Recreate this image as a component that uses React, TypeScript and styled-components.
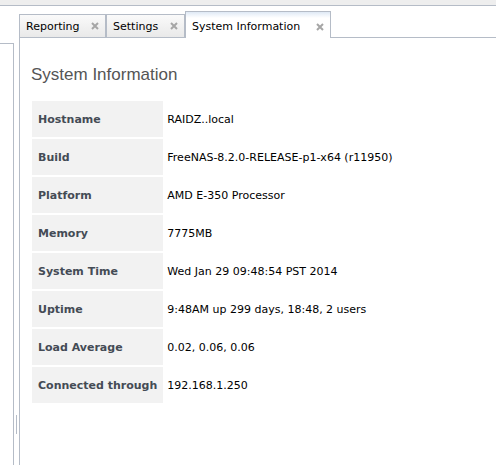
import React from 'react'
import styled, { createGlobalStyle } from 'styled-components'

const GlobalStyle = createGlobalStyle`
  html, body {
    margin: 0;
    padding: 0;
    background: #ffffff;
    overflow: hidden;
  }
`

const TABS = [
  { label: 'Reporting', width: 87, active: false },
  { label: 'Settings', width: 79, active: false },
  { label: 'System Information', width: 146, active: true },
]

const INFO: [string, string][] = [
  ['Hostname', 'RAIDZ..local'],
  ['Build', 'FreeNAS-8.2.0-RELEASE-p1-x64 (r11950)'],
  ['Platform', 'AMD E-350 Processor'],
  ['Memory', '7775MB'],
  ['System Time', 'Wed Jan 29 09:48:54 PST 2014'],
  ['Uptime', '9:48AM up 299 days, 18:48, 2 users'],
  ['Load Average', '0.02, 0.06, 0.06'],
  ['Connected through', '192.168.1.250'],
]

function CloseIcon(): JSX.Element {
  return (
    <CloseSCP width="8" height="8" viewBox="0 0 8 8">
      <path d="M1 1 L7 7 M7 1 L1 7" stroke="#a6a6a6" strokeWidth="2" strokeLinecap="butt" />
    </CloseSCP>
  )
}

export default function App(): JSX.Element {
  return (
    <PageSCP>
      <GlobalStyle />
      <TopBarSCP />
      <MainSCP>
        <LeftPaneSCP />
        <SplitterSCP>
          <SplitterHandleSCP />
        </SplitterSCP>
        <CenterSCP>
          <TabStripSCP>
            {TABS.map(tab => (
              <TabSCP key={tab.label} active={tab.active} width={tab.width}>
                <span>{tab.label}</span>
                <CloseIcon />
              </TabSCP>
            ))}
            <TabFillSCP />
          </TabStripSCP>
          <ContentSCP>
            <TitleSCP>System Information</TitleSCP>
            <InfoTableSCP>
              <tbody>
                {INFO.map(([label, value]) => (
                  <tr key={label}>
                    <LabelCellSCP>{label}</LabelCellSCP>
                    <ValueCellSCP>{value}</ValueCellSCP>
                  </tr>
                ))}
              </tbody>
            </InfoTableSCP>
          </ContentSCP>
        </CenterSCP>
      </MainSCP>
    </PageSCP>
  )
}

const border = '#b5bcc7'

const PageSCP = styled.div`
  width: 496px;
  height: 465px;
  display: flex;
  flex-direction: column;
  font-family: 'DejaVu Sans', Verdana, sans-serif;
  font-size: 11px;
  color: #000;
`
const TopBarSCP = styled.div`
  height: 5px;
  background: #eeeeee;
  border-bottom: 1px solid ${border};
  flex: none;
`
const MainSCP = styled.div`
  flex: 1;
  display: flex;
  min-height: 0;
`
const LeftPaneSCP = styled.div`
  width: 13px;
  margin-top: 37px;
  border-top: 1px solid ${border};
  border-right: 1px solid ${border};
  flex: none;
`
const SplitterSCP = styled.div`
  width: 5px;
  flex: none;
  display: flex;
  justify-content: center;
  align-items: flex-start;
  padding-top: 409px;
`
const SplitterHandleSCP = styled.div`
  width: 1px;
  height: 19px;
  background: ${border};
`
const CenterSCP = styled.div`
  flex: 1;
  display: flex;
  flex-direction: column;
  min-width: 0;
`
const TabStripSCP = styled.div`
  display: flex;
  align-items: flex-end;
  height: 32px;
  flex: none;
`
const TabSCP = styled.div<{ active: boolean; width: number }>`
  display: flex;
  align-items: center;
  justify-content: space-between;
  box-sizing: border-box;
  width: ${p => p.width}px;
  flex: none;
  height: ${p => (p.active ? 27 : 24)}px;
  padding: ${p => (p.active ? 3 : 0)}px 6px 0 6px;
  border: 1px solid ${border};
  border-bottom: ${p => (p.active ? 'none' : `1px solid ${border}`)};
  background: ${p =>
    p.active
      ? 'linear-gradient(#dfe9f5 0, #ffffff 6px, #ffffff 100%)'
      : 'linear-gradient(#fafafa, #e9e9e9)'};
  color: #000;
  white-space: nowrap;
`
const CloseSCP = styled.svg`
  display: block;
  flex: none;
`
const TabFillSCP = styled.div`
  flex: 1;
  border-bottom: 1px solid ${border};
`
const ContentSCP = styled.div`
  flex: 1;
  border-left: 1px solid ${border};
  padding: 24px 10px 0 11px;
`
const TitleSCP = styled.h2`
  margin: 0 0 11px 0;
  font-family: 'Liberation Sans', Arial, sans-serif;
  font-size: 17px;
  font-weight: normal;
  color: #555555;
  line-height: 26px;
`
const InfoTableSCP = styled.table`
  border-collapse: separate;
  border-spacing: 2px;
  margin-left: -1px;
`
const LabelCellSCP = styled.td`
  width: 130px;
  box-sizing: border-box;
  height: 36px;
  padding: 0 6px;
  background: #f2f2f2;
  font-weight: bold;
  color: #444b55;
  white-space: nowrap;
`
const ValueCellSCP = styled.td`
  padding: 0 2px;
  color: #000;
  white-space: nowrap;
`
